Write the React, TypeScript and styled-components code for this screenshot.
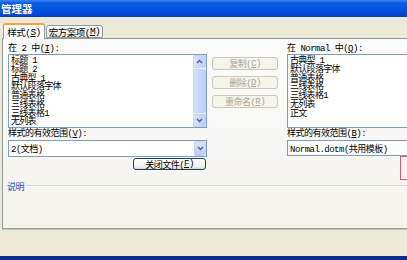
import styled, { createGlobalStyle } from 'styled-components';

const GlobalStyle = createGlobalStyle`
  html, body {
    margin: 0;
    padding: 0;
    background: #ece9d8;
  }
  body {
    font-family: "Liberation Mono", "Noto Sans CJK SC", monospace;
  }
`;

const leftItems = ['标题 1', '标题 2', '古典型 1', '默认段落字体', '普通表格', '三线表格', '三线表格1', '无列表'];
const rightItems = ['古典型 1', '默认段落字体', '普通表格', '三线表格', '三线表格1', '无列表', '正文'];

const Window = styled.div`
  width: 407px;
  height: 260px;
  overflow: hidden;
  background: #ece9d8;
  display: flex;
  flex-direction: column;
  font-size: 9px;
  letter-spacing: -0.5px;
  color: #000;
`;

const TitleBar = styled.div`
  flex: none;
  height: 17px;
  display: flex;
  align-items: center;
  padding-left: 1px;
  background: linear-gradient(#3d86f4 0, #0a5de6 3px, #0553df 60%, #0445cf 100%);
  border-bottom: 1px solid #0a3fb8;
  box-sizing: border-box;
  color: #fff;
  font-family: "Noto Sans CJK SC", sans-serif;
  font-weight: bold;
  font-size: 10.5px;
  letter-spacing: 0;
`;

const TabStrip = styled.div`
  flex: none;
  height: 21px;
  display: flex;
  align-items: flex-end;
  gap: 1px;
  padding-left: 3px;
`;

const Tab = styled.div<{ $active?: boolean; $w: number }>`
  position: relative;
  z-index: 1;
  box-sizing: border-box;
  width: ${p => p.$w}px;
  height: ${p => (p.$active ? 16 : 13)}px;
  margin-bottom: ${p => (p.$active ? -1 : 0)}px;
  display: flex;
  align-items: center;
  justify-content: center;
  border: 1px solid #919b9c;
  border-bottom: ${p => (p.$active ? 'none' : '1px solid #919b9c')};
  border-top: ${p => (p.$active ? '2px solid #f2a33a' : '1px solid #919b9c')};
  border-radius: 3px 3px 0 0;
  background: ${p => (p.$active ? '#fcfcfe' : 'linear-gradient(#fefefe, #ecebe5)')};
  font-size: 9.5px;
`;

const Panel = styled.div`
  position: relative;
  flex: none;
  height: 191px;
  margin-left: 2px;
  box-sizing: border-box;
  border: 1px solid #919b9c;
  border-right: none;
  background: linear-gradient(#fbfbf9, #f4f3ee);
  padding: 5px 0 0 5px;
  overflow: hidden;
  box-shadow: 0 1px 0 #c8c5b5;
`;

const Columns = styled.div`
  display: flex;
  align-items: flex-start;
`;

const LeftCol = styled.div`
  width: 199px;
  flex: none;
  display: flex;
  flex-direction: column;
`;

const MidCol = styled.div`
  width: 66px;
  flex: none;
  margin-left: 5px;
  padding-top: 13px;
  display: flex;
  flex-direction: column;
  gap: 6px;
`;

const RightCol = styled.div`
  width: 130px;
  flex: none;
  margin-left: 9px;
  display: flex;
  flex-direction: column;
`;

const Label = styled.div<{ $h: number }>`
  height: ${p => p.$h}px;
  line-height: ${p => p.$h}px;
  white-space: nowrap;
`;

const ListBox = styled.div`
  height: 74px;
  box-sizing: border-box;
  border: 1px solid #7f9db9;
  background: #fff;
  display: flex;
`;

const Items = styled.div`
  flex: 1;
  padding: 2px 0 0 2px;
  font-size: 9px;
  letter-spacing: -0.7px;
`;

const Item = styled.div`
  height: 8.75px;
  line-height: 8.75px;
  white-space: nowrap;
`;

const ScrollBar = styled.div`
  width: 13px;
  flex: none;
  display: flex;
  flex-direction: column;
  background: #f1efe8;
`;

const ScrollBtn = styled.div<{ $grow?: boolean }>`
  box-sizing: border-box;
  height: ${p => (p.$grow ? 'auto' : '13px')};
  flex: ${p => (p.$grow ? 1 : 'none')};
  margin: ${p => (p.$grow ? '1px 0' : '0')};
  display: flex;
  align-items: center;
  justify-content: center;
  border: 1px solid #c3d3f9;
  border-radius: 2px;
  background: linear-gradient(90deg, #d5e2fd, #bccffa);
`;

const Combo = styled.div<{ $h: number }>`
  height: ${p => p.$h}px;
  box-sizing: border-box;
  border: 1px solid #7f9db9;
  background: #fff;
  display: flex;
  align-items: center;
  padding-left: 2px;
  white-space: nowrap;
`;

const ComboText = styled.div`
  flex: 1;
`;

const DropBtn = styled.div`
  width: 12px;
  height: 15px;
  flex: none;
  box-sizing: border-box;
  display: flex;
  align-items: center;
  justify-content: center;
  border: 1px solid #c3d3f9;
  border-radius: 2px;
  background: linear-gradient(#dbe6fd, #b9cdf9);
`;

const Button = styled.div<{ $disabled?: boolean; $w?: number; $h: number }>`
  box-sizing: border-box;
  width: ${p => (p.$w ? `${p.$w}px` : '100%')};
  height: ${p => p.$h}px;
  display: flex;
  align-items: center;
  justify-content: center;
  border-radius: 3px;
  border: 1px solid ${p => (p.$disabled ? '#cac8bb' : '#1c3f6e')};
  background: ${p => (p.$disabled ? '#f5f4ea' : 'linear-gradient(#ffffff, #f0efe9 80%, #d8d3c6)')};
  color: ${p => (p.$disabled ? '#aca899' : '#000')};
  white-space: nowrap;
`;

const CloseRow = styled.div`
  display: flex;
  justify-content: flex-end;
  padding-right: 1px;
  margin-top: 1px;
`;

const Group = styled.div`
  display: flex;
  align-items: center;
  height: 10px;
  margin: 11px 0 0 -1px;
`;

const GroupTitle = styled.div`
  color: #2050c8;
  padding-right: 2px;
`;

const GroupLine = styled.div`
  flex: 1;
  border-top: 1px solid #d6d4c6;
  border-bottom: 1px solid #fff;
`;

const RedMark = styled.div`
  position: absolute;
  left: 397px;
  top: 117px;
  width: 14px;
  height: 24px;
  border: 1.5px solid #d65a70;
  box-sizing: border-box;
`;

const Footer = styled.div`
  flex: 1;
`;

const BlueEdge = styled.div`
  flex: none;
  height: 4px;
  background: #0b2c8a;
`;

const Chevron = ({ up }: { up?: boolean }) => (
  <svg width="7" height="5" viewBox="0 0 7 5">
    <path
      d={up ? 'M1 4 L3.5 1.5 L6 4' : 'M1 1 L3.5 3.5 L6 1'}
      fill="none"
      stroke="#4d6185"
      strokeWidth="1.4"
    />
  </svg>
);

const StyleList = ({ items, scroll }: { items: string[]; scroll?: boolean }) => (
  <ListBox>
    <Items>
      {items.map(t => (
        <Item key={t}>{t}</Item>
      ))}
    </Items>
    {scroll && (
      <ScrollBar>
        <ScrollBtn>
          <Chevron up />
        </ScrollBtn>
        <ScrollBtn $grow />
        <ScrollBtn>
          <Chevron />
        </ScrollBtn>
      </ScrollBar>
    )}
  </ListBox>
);

export default function App() {
  return (
    <>
      <GlobalStyle />
      <Window>
        <TitleBar>管理器</TitleBar>
        <TabStrip>
          <Tab $active $w={42}>
            样式(<u>S</u>)
          </Tab>
          <Tab $w={57}>
            宏方案项(<u>M</u>)
          </Tab>
        </TabStrip>
        <Panel>
          <Columns>
            <LeftCol>
              <Label $h={10}>
                在 2 中(<u>I</u>):
              </Label>
              <StyleList items={leftItems} scroll />
              <Label $h={12}>
                样式的有效范围(<u>V</u>):
              </Label>
              <Combo $h={17}>
                <ComboText>2(文档)</ComboText>
                <DropBtn>
                  <Chevron />
                </DropBtn>
              </Combo>
              <CloseRow>
                <Button $w={73} $h={12}>
                  关闭文件(<u>F</u>)
                </Button>
              </CloseRow>
            </LeftCol>
            <MidCol>
              <Button $disabled $h={13}>
                复制(<u>C</u>)
              </Button>
              <Button $disabled $h={13}>
                删除(<u>D</u>)
              </Button>
              <Button $disabled $h={13}>
                重命名(<u>R</u>)
              </Button>
            </MidCol>
            <RightCol>
              <Label $h={10}>
                在 Normal 中(<u>Q</u>):
              </Label>
              <StyleList items={rightItems} />
              <Label $h={12}>
                样式的有效范围(<u>B</u>):
              </Label>
              <Combo $h={16}>
                <ComboText>Normal.dotm(共用模板)</ComboText>
              </Combo>
            </RightCol>
          </Columns>
          <Group>
            <GroupTitle>说明</GroupTitle>
            <GroupLine />
          </Group>
          <RedMark />
        </Panel>
        <Footer />
        <BlueEdge />
      </Window>
    </>
  );
}
